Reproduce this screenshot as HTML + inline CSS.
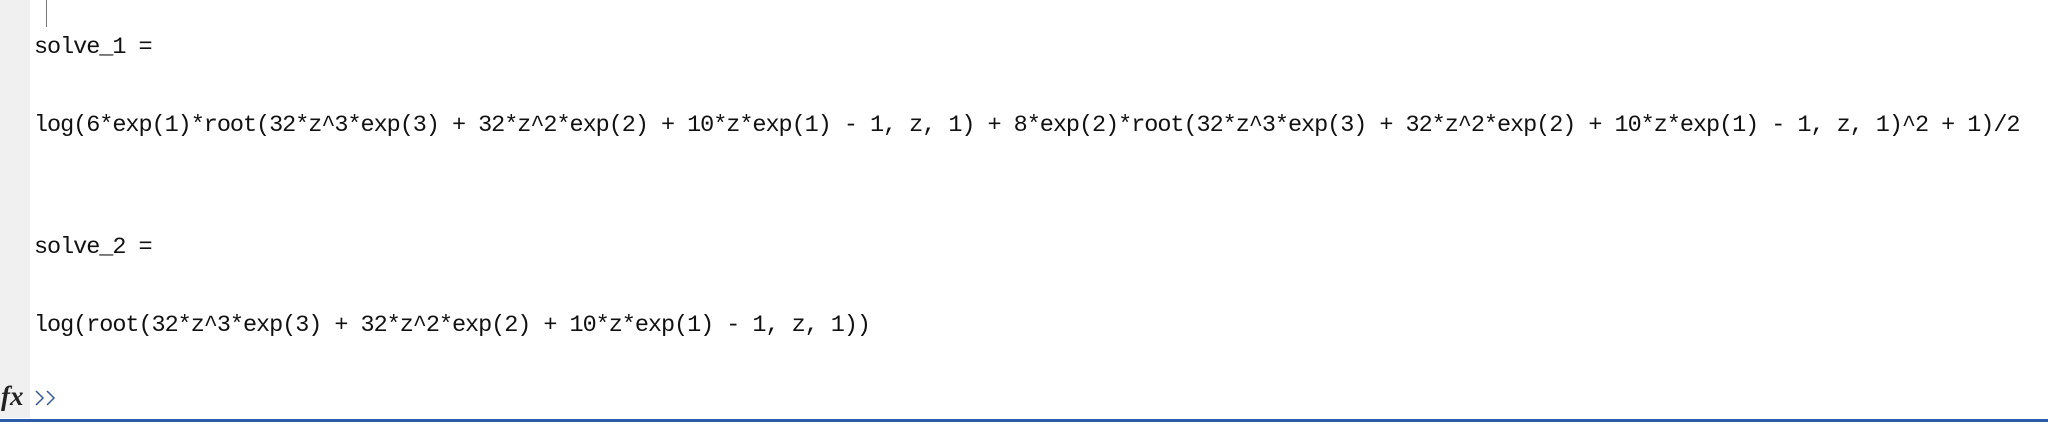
<!DOCTYPE html>
<html><head><style>
html,body{margin:0;padding:0;width:2048px;height:424px;overflow:hidden;background:#fff;}
.bar{position:absolute;left:0;top:0;width:30px;height:418px;background:#f0f0f0;}
.cur{position:absolute;left:46px;top:0;width:1px;height:27px;background:#777;}
.t{position:absolute;left:34px;font-family:"Liberation Mono",monospace;font-size:23.5px;letter-spacing:-1.04px;line-height:26px;color:#111;white-space:pre;}
.line{position:absolute;left:0;top:419px;width:2048px;height:3px;background:#2a5caa;}
.fx{position:absolute;left:1px;top:381px;font-family:"Liberation Serif",serif;font-style:italic;font-weight:bold;font-size:27px;color:#222;}
</style></head><body>
<div class="bar"></div>
<div class="cur"></div>
<div class="t" style="top:35px">solve_1 =</div>
<div class="t" style="top:113px">log(6*exp(1)*root(32*z^3*exp(3) + 32*z^2*exp(2) + 10*z*exp(1) - 1, z, 1) + 8*exp(2)*root(32*z^3*exp(3) + 32*z^2*exp(2) + 10*z*exp(1) - 1, z, 1)^2 + 1)/2</div>
<div class="t" style="top:235px">solve_2 =</div>
<div class="t" style="top:313px">log(root(32*z^3*exp(3) + 32*z^2*exp(2) + 10*z*exp(1) - 1, z, 1))</div>
<div class="fx">fx</div>
<svg style="position:absolute;left:34px;top:388px" width="26" height="20"><path d="M2 3 L9 10 L2 17 M13 3 L20 10 L13 17" stroke="#3a5a9a" stroke-width="1.5" fill="none"/></svg>
<div class="line"></div>
</body></html>
